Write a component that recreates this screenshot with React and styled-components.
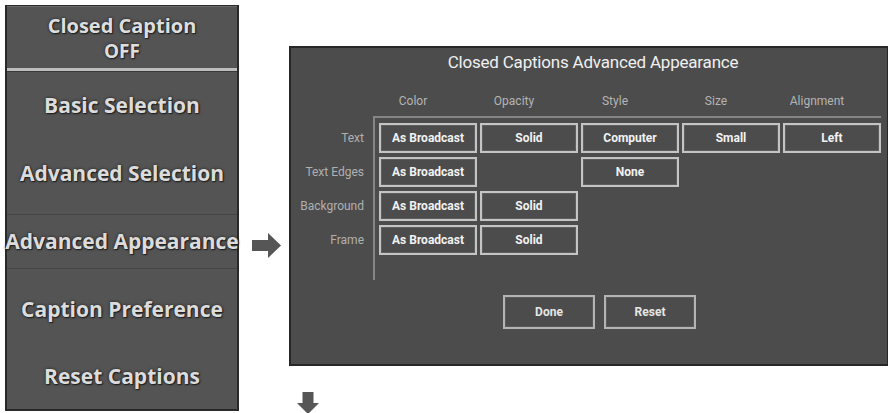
import React from "react";
import styled, { createGlobalStyle } from "styled-components";

const Global = createGlobalStyle`
  html, body { margin: 0; padding: 0; background: #ffffff; overflow: hidden; }
  body { font-family: "Open Sans", "Noto Sans", sans-serif; }
`;

const Page = styled.div`
  display: flex;
  align-items: flex-start;
  padding: 5px 0 0 5px;
  width: 888px;
  height: 413px;
  box-sizing: border-box;
  overflow: hidden;
`;

const SidePanel = styled.nav`
  width: 234px;
  height: 406px;
  box-sizing: border-box;
  border: 2px solid #2a2a2a;
  background: #545454;
  display: flex;
  flex-direction: column;
  flex-shrink: 0;
`;

const PanelHeader = styled.div`
  height: 61px;
  display: flex;
  flex-direction: column;
  align-items: center;
  justify-content: center;
  border-bottom: 3px solid #bdbdbd;
  box-shadow: 0 1px 0 #3a3a3a, 0 -1px 0 #6a6a6a;
  font-family: "Open Sans", sans-serif;
  font-weight: 700;
  color: #dedede;
  text-shadow: 0 0 3px #1e1e1e, 1px 1px 1px #222;
`;

const HeaderLine = styled.div`
  font-size: ${(p) => (p.$small ? "19px" : "20px")};
  line-height: ${(p) => (p.$small ? "25px" : "27px")};
`;

const MenuItem = styled.div`
  height: ${(p) => (p.$last ? "65px" : "68px")};
  display: flex;
  align-items: center;
`;

const MenuBand = styled.div`
  width: 100%;
  height: 55px;
  box-sizing: border-box;
  display: flex;
  align-items: center;
  justify-content: center;
  white-space: nowrap;
  border-top: 1px solid ${(p) => (p.$selected ? "#454545" : "transparent")};
  border-bottom: 1px solid ${(p) => (p.$selected ? "#454545" : "transparent")};
  font-family: "Open Sans", sans-serif;
  font-weight: 700;
  font-size: 21px;
  color: #dcdcdc;
  text-shadow: 0 0 3px #1e1e1e, 1px 1px 1px #222;
`;

const ArrowRightBox = styled.div`
  margin: 228px 0 0 13px;
  width: 29px;
  height: 25px;
  flex-shrink: 0;
`;

const RightColumn = styled.div`
  margin: 41px 0 0 8px;
  display: flex;
  flex-direction: column;
  flex-shrink: 0;
`;

const Dialog = styled.section`
  width: 600px;
  height: 320px;
  box-sizing: border-box;
  border: 2px solid #272727;
  background: #4c4c4c;
  font-family: Roboto, "Open Sans", sans-serif;
  display: flex;
  flex-direction: column;
`;

const Title = styled.h1`
  margin: 2px 0 0 0;
  padding-left: 8px;
  font-weight: 400;
  font-size: 17px;
  line-height: 24px;
  letter-spacing: -0.2px;
  color: #f0f0f0;
  text-align: center;
`;

const HeaderRow = styled.div`
  margin: 17px 0 0 73px;
  display: grid;
  grid-template-columns: repeat(5, 98px);
  column-gap: 3px;
  height: 20px;
`;

const ColHeader = styled.div`
  font-size: 12px;
  line-height: 20px;
  color: #b4b4b4;
  text-align: center;
`;

const TableBody = styled.div`
  margin-top: 5px;
  display: flex;
`;

const LabelColumn = styled.div`
  width: 82px;
  box-sizing: border-box;
  padding: 7px 9px 0 0;
  display: flex;
  flex-direction: column;
  gap: 4px;
`;

const RowLabel = styled.div`
  height: 30px;
  font-size: 12px;
  line-height: 30px;
  color: #b0b0b0;
  text-align: right;
  white-space: nowrap;
`;

const CellArea = styled.div`
  border-top: 2px solid #858585;
  border-left: 2px solid #858585;
  padding: 5px 0 25px 4px;
  display: grid;
  grid-template-columns: repeat(5, 98px);
  grid-auto-rows: 30px;
  column-gap: 3px;
  row-gap: 4px;
`;

const Cell = styled.div`
  box-sizing: border-box;
  border: 2px solid #c4c4c4;
  box-shadow: inset 0 0 0 1px #5e5e5e;
  display: flex;
  align-items: center;
  justify-content: center;
  font-size: 12px;
  font-weight: 700;
  color: #f2f2f2;
  white-space: nowrap;
`;

const Empty = styled.div``;

const ActionRow = styled.div`
  margin-top: 15px;
  padding-left: 21px;
  display: flex;
  justify-content: center;
  gap: 9px;
`;

const ActionButton = styled.button`
  width: 92px;
  height: 34px;
  box-sizing: border-box;
  border: 2px solid #b4b4b4;
  box-shadow: inset 0 0 0 1px #5a5a5a;
  background: transparent;
  font-family: Roboto, sans-serif;
  font-size: 12px;
  font-weight: 700;
  color: #e6e6e6;
  padding: 0;
`;

const ArrowDownBox = styled.div`
  margin: 26px 0 0 8px;
  width: 22px;
  height: 22px;
`;

const menu = [
  "Basic Selection",
  "Advanced Selection",
  "Advanced Appearance",
  "Caption Preference",
  "Reset Captions",
];

const headers = ["Color", "Opacity", "Style", "Size", "Alignment"];

const rows = [
  { label: "Text", cells: ["As Broadcast", "Solid", "Computer", "Small", "Left"] },
  { label: "Text Edges", cells: ["As Broadcast", null, "None", null, null] },
  { label: "Background", cells: ["As Broadcast", "Solid", null, null, null] },
  { label: "Frame", cells: ["As Broadcast", "Solid", null, null, null] },
];

export default function App() {
  return (
    <>
      <Global />
      <Page>
        <SidePanel>
          <PanelHeader>
            <HeaderLine>Closed Caption</HeaderLine>
            <HeaderLine $small>OFF</HeaderLine>
          </PanelHeader>
          {menu.map((m, i) => (
            <MenuItem key={m} $last={i === menu.length - 1}>
              <MenuBand $selected={m === "Advanced Appearance"}>{m}</MenuBand>
            </MenuItem>
          ))}
        </SidePanel>
        <ArrowRightBox>
          <svg width="29" height="25" viewBox="0 0 29 25">
            <polygon points="0,7 16,7 16,0 29,12.5 16,25 16,18 0,18" fill="#565656" />
          </svg>
        </ArrowRightBox>
        <RightColumn>
          <Dialog>
            <Title>Closed Captions Advanced Appearance</Title>
            <HeaderRow>
              {headers.map((h) => (
                <ColHeader key={h}>{h}</ColHeader>
              ))}
            </HeaderRow>
            <TableBody>
              <LabelColumn>
                {rows.map((r) => (
                  <RowLabel key={r.label}>{r.label}</RowLabel>
                ))}
              </LabelColumn>
              <CellArea>
                {rows.map((r) =>
                  r.cells.map((c, j) =>
                    c ? <Cell key={r.label + j}>{c}</Cell> : <Empty key={r.label + j} />
                  )
                )}
              </CellArea>
            </TableBody>
            <ActionRow>
              <ActionButton>Done</ActionButton>
              <ActionButton>Reset</ActionButton>
            </ActionRow>
          </Dialog>
          <ArrowDownBox>
            <svg width="22" height="22" viewBox="0 0 22 22">
              <polygon points="5.5,0 16.5,0 16.5,11 22,11 11,22 0,11 5.5,11" fill="#565656" />
            </svg>
          </ArrowDownBox>
        </RightColumn>
      </Page>
    </>
  );
}
